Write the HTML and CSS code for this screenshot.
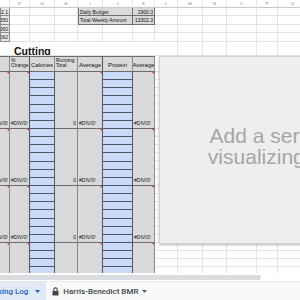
FILE: index.html
```html
<!DOCTYPE html>
<html lang="en">
<head>
  <meta charset="UTF-8" />
  <meta name="viewport" content="width=device-width, initial-scale=1.0"/>
  <title>Tracking Log</title>
  <link rel="stylesheet" href="styles.css">
</head>
<body>
  <div class="sheet">
    <div class="grid">
      <!-- column letters -->
      <div class="ch"></div><div class="ch">F</div><div class="ch">G</div><div class="ch">H</div>
      <div class="ch">I</div><div class="ch">J</div><div class="ch">K</div><div class="ch">L</div>
      <div class="ch">M</div><div class="ch">N</div><div class="ch">O</div><div class="ch">P</div>
      <div class="ch">Q</div>

      <!-- rows 1-4 -->
      <div class="c box num">2.1</div>
      <div class="c"></div><div class="c"></div><div class="c"></div>
      <div class="c lbl span2">Daily Budget</div>
      <div class="c lbl num">1900.3</div>
      <div class="c"></div><div class="c"></div><div class="c"></div><div class="c"></div><div class="c"></div><div class="c"></div>

      <div class="c box num">1350</div>
      <div class="c"></div><div class="c"></div><div class="c"></div>
      <div class="c lbl span2">Total Weekly Amount</div>
      <div class="c lbl num">13302.3</div>
      <div class="c"></div><div class="c"></div><div class="c"></div><div class="c"></div><div class="c"></div><div class="c"></div>

      <div class="c box num">950</div>
      <div class="c"></div><div class="c"></div><div class="c"></div><div class="c"></div><div class="c"></div><div class="c"></div>
      <div class="c"></div><div class="c"></div><div class="c"></div><div class="c"></div><div class="c"></div><div class="c"></div>

      <div class="c box num">662</div>
      <div class="c"></div><div class="c"></div><div class="c"></div><div class="c"></div><div class="c"></div><div class="c"></div>
      <div class="c"></div><div class="c"></div><div class="c"></div><div class="c"></div><div class="c"></div><div class="c"></div>

      <!-- title row -->
      <div class="c title">Cutting</div>
      <div class="c"></div><div class="c"></div><div class="c"></div><div class="c"></div><div class="c"></div><div class="c"></div>

      <!-- table header -->
      <div class="c g hd"></div>
      <div class="c g hd small pre">%<br>Change</div>
      <div class="c g hd mid">Calories</div>
      <div class="c g hd small">Running<br>Total</div>
      <div class="c g hd mid pre">Average</div>
      <div class="c g hd mid">Protein</div>
      <div class="c g hd mid">Average</div>
      <div class="c"></div><div class="c"></div><div class="c"></div><div class="c"></div><div class="c"></div><div class="c"></div>

      <!-- week 1 -->
      <div class="c g num note">#DIV/0!</div>
      <div class="c g pre note">#DIV/0!</div>
      <div class="c blue"><i></i><i></i><i></i><i></i><i></i><i></i><i></i></div>
      <div class="c g num">0</div>
      <div class="c g pre note">#DIV/0!</div>
      <div class="c blue"><i></i><i></i><i></i><i></i><i></i><i></i><i></i></div>
      <div class="c g note">#DIV/0!</div>
      <div class="c lines"></div><div class="c lines"></div><div class="c lines"></div><div class="c lines"></div><div class="c lines"></div><div class="c lines"></div>

      <!-- week 2 -->
      <div class="c g num note">#DIV/0!</div>
      <div class="c g pre note">#DIV/0!</div>
      <div class="c blue"><i></i><i></i><i></i><i></i><i></i><i></i><i></i></div>
      <div class="c g num">0</div>
      <div class="c g pre note">#DIV/0!</div>
      <div class="c blue"><i></i><i></i><i></i><i></i><i></i><i></i><i></i></div>
      <div class="c g note">#DIV/0!</div>
      <div class="c lines"></div><div class="c lines"></div><div class="c lines"></div><div class="c lines"></div><div class="c lines"></div><div class="c lines"></div>

      <!-- week 3 -->
      <div class="c g num note">#DIV/0!</div>
      <div class="c g pre note">#DIV/0!</div>
      <div class="c blue"><i></i><i></i><i></i><i></i><i></i><i></i><i></i></div>
      <div class="c g num">0</div>
      <div class="c g pre note">#DIV/0!</div>
      <div class="c blue"><i></i><i></i><i></i><i></i><i></i><i></i><i></i></div>
      <div class="c g note">#DIV/0!</div>
      <div class="c lines"></div><div class="c lines"></div><div class="c lines"></div><div class="c lines"></div><div class="c lines"></div><div class="c lines"></div>

      <!-- week 4 -->
      <div class="c g num note">#DIV/0!</div>
      <div class="c g pre note">#DIV/0!</div>
      <div class="c blue"><i></i><i></i><i></i><i></i><i></i><i></i><i></i></div>
      <div class="c g num">0</div>
      <div class="c g pre note">#DIV/0!</div>
      <div class="c blue"><i></i><i></i><i></i><i></i><i></i><i></i><i></i></div>
      <div class="c g note">#DIV/0!</div>
      <div class="c lines"></div><div class="c lines"></div><div class="c lines"></div><div class="c lines"></div><div class="c lines"></div><div class="c lines"></div>
    </div>

    <div class="chart"><p>Add a series to start<br>visualizing your data</p></div>
  </div>

  <div class="hbar"><div class="thumb"></div></div>

  <div class="tabs">
    <div class="tab on">
      <span>Tracking Log</span>
      <svg width="5" height="3" viewBox="0 0 5 3"><path d="M0 0h5L2.5 3z" fill="#1a5fc7"/></svg>
    </div>
    <div class="tab">
      <svg width="7" height="9" viewBox="0 0 7 9"><path d="M1.8 4V2.6a1.7 1.7 0 0 1 3.4 0V4" fill="none" stroke="#444" stroke-width="1.1"/><rect x="0.5" y="4" width="6" height="4.6" rx="0.6" fill="#444"/></svg>
      <span>Harris-Benedict BMR</span>
      <svg width="5" height="3" viewBox="0 0 5 3"><path d="M0 0h5L2.5 3z" fill="#5f6368"/></svg>
    </div>
  </div>
</body>
</html>
```

FILE: styles.css
```css
body {
  margin: 0;
  width: 300px;
  height: 300px;
  overflow: hidden;
  background: #fff;
  font-family: "Liberation Sans", Arial, sans-serif;
}
.sheet {
  position: relative;
  height: 273px;
  overflow: hidden;
}
.grid {
  display: grid;
  grid-template-columns: 10px 20px 25px 23px 25px 30px 22px 23px 25px 24px 30px 21px 30px;
  grid-template-rows: 8px 8px 9px 8px 9px 14px 16px repeat(4, 57px);
}
.ch {
  box-sizing: border-box;
  border-right: 1px solid #e2e3e3;
  border-bottom: 1px solid #c7c7c7;
  font-size: 4px;
  color: #777;
  display: flex;
  align-items: center;
  justify-content: center;
}
.c {
  position: relative;
  box-sizing: border-box;
  border-right: 1px solid #e2e3e3;
  border-bottom: 1px solid #e2e3e3;
  padding: 0 1px;
  font-size: 5px;
  line-height: 6px;
  color: #111;
  white-space: nowrap;
  overflow: hidden;
  display: flex;
  align-items: center;
}
.num {
  justify-content: flex-end;
}
.box {
  background: #e6e6e6;
  border: 1px solid #8d8d8d;
  border-top: 0;
}
.lbl {
  background: #d9d9d9;
  border-right: 1px solid #6f6f6f;
  border-bottom: 1px solid #6f6f6f;
}
.span2 {
  grid-column: span 2;
  border-left: 1px solid #6f6f6f;
}
.title {
  grid-column: span 7;
  font-size: 10.5px;
  font-weight: bold;
  padding-left: 14px;
  align-items: flex-end;
  padding-bottom: 1px;
  border-right-color: #fff;
}
.g {
  background: #d9d9d9;
  border-right: 1px solid #8a8a8a;
  border-bottom: 1px solid #6c6c6c;
  align-items: flex-end;
  padding-bottom: 2px;
}
.g.pre {
  border-right-color: #50565f;
}
.hd {
  border-top: 1px solid #6c6c6c;
  padding-bottom: 2px;
}
.small {
  white-space: normal;
  line-height: 5px;
  padding-bottom: 3px;
}
.mid {
  font-size: 6px;
  justify-content: center;
  padding-bottom: 3px;
}
.note::after {
  content: "";
  position: absolute;
  top: 0;
  right: 0;
  border-top: 2px solid #e0291d;
  border-left: 2px solid transparent;
}
.blue {
  background: #c9daf8;
  border-right: 1px solid #50565f;
  border-bottom: 0;
  padding: 0;
  flex-direction: column;
  align-items: stretch;
}
.blue i {
  flex: 1;
  border-bottom: 1px solid #4f5663;
}
.lines {
  background: linear-gradient(#e2e3e3 1px, transparent 1px) 0 7px / 100% 8.14px;
}
.chart {
  position: absolute;
  left: 159px;
  top: 56px;
  width: 288px;
  height: 188px;
  box-sizing: border-box;
  background: #eee;
  border: 1px solid #d2d2d2;
  box-shadow: 0 1px 2px rgba(0, 0, 0, 0.3);
  display: flex;
  align-items: center;
  justify-content: center;
  text-align: center;
  font-family: "Liberation Sans", Arial, sans-serif;
  font-size: 21px;
  line-height: 21px;
  color: #a6a6a6;
  white-space: nowrap;
}
.chart p {
  margin: 0 0 8px;
}
.hbar {
  height: 8px;
  padding-top: 2px;
  box-sizing: border-box;
}
.thumb {
  width: 261px;
  height: 5px;
  background: #dadce0;
  border-radius: 0 3px 3px 0;
}
.tabs {
  display: flex;
  height: 19px;
  margin-left: -24px;
  background: #f8f9fa;
  border-top: 1px solid #e6e8eb;
  font-family: Roboto, sans-serif;
  font-size: 8px;
  font-weight: 500;
  color: #444;
}
.tab {
  display: flex;
  align-items: center;
  gap: 4px;
  padding: 0 6px;
}
.tab.on {
  background: #e1e9f7;
  color: #1a5fc7;
  box-shadow: inset 0 -1px 0 #f4b4ae;
  gap: 7px;
}
```
